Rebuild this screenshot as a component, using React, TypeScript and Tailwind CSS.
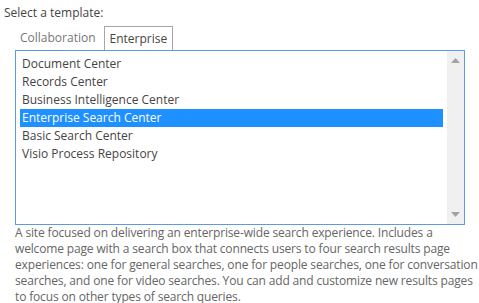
import { useState } from 'react'

const templates = [
  'Document Center',
  'Records Center',
  'Business Intelligence Center',
  'Enterprise Search Center',
  'Basic Search Center',
  'Visio Process Repository',
]

// wrapped the way the original dialog wraps it
const description = [
  'A site focused on delivering an enterprise-wide search experience. Includes a',
  'welcome page with a search box that connects users to four search results page',
  'experiences: one for general searches, one for people searches, one for conversation',
  'searches, and one for video searches. You can add and customize new results pages',
  'to focus on other types of search queries.',
]

export default function App() {
  const [selected, setSelected] = useState('Enterprise Search Center')

  return (
    <div className="w-[479px] h-[303px] overflow-hidden bg-white text-[12px] leading-4 text-[#444] font-['Open_Sans',sans-serif]">
      <div className="pt-[5px] pl-1">Select a template:</div>

      {/* Tabs */}
      <div className="flex mt-[5px] ml-[15px] h-6">
        <div className="pl-[5px] pr-2 pt-1 text-[#777]">Collaboration</div>
        <div className="relative z-10 -mb-px h-6 px-[5px] pt-1 border border-b-0 border-[#a6a6a6] bg-white">
          Enterprise
        </div>
      </div>

      {/* List */}
      <div className="ml-[15px] w-[450px] h-[175px] flex border border-[#5a9ae6]">
        <ul className="flex-1 pt-1 px-1">
          {templates.map((t) => (
            <li
              key={t}
              onClick={() => setSelected(t)}
              className={
                t === selected
                  ? 'h-[18px] leading-[18px] pl-[2px] bg-[#1e90ff] text-white'
                  : 'h-[18px] leading-[18px] pl-[2px]'
              }
            >
              {t}
            </li>
          ))}
        </ul>
        <div className="w-[17px] bg-[#f0f0f0] flex flex-col justify-between items-center py-[7px]">
          <svg width="9" height="5" viewBox="0 0 9 5">
            <path d="M4.5 0 L9 5 L0 5 Z" fill="#a3a3a3" />
          </svg>
          <svg width="9" height="5" viewBox="0 0 9 5">
            <path d="M0 0 L9 0 L4.5 5 Z" fill="#a3a3a3" />
          </svg>
        </div>
      </div>

      {/* Description */}
      <div className="ml-[15px] w-[460px] text-[#666] tracking-[-0.15px]">
        {description.map((line) => (
          <div key={line} className="whitespace-nowrap">
            {line}
          </div>
        ))}
      </div>
    </div>
  )
}
